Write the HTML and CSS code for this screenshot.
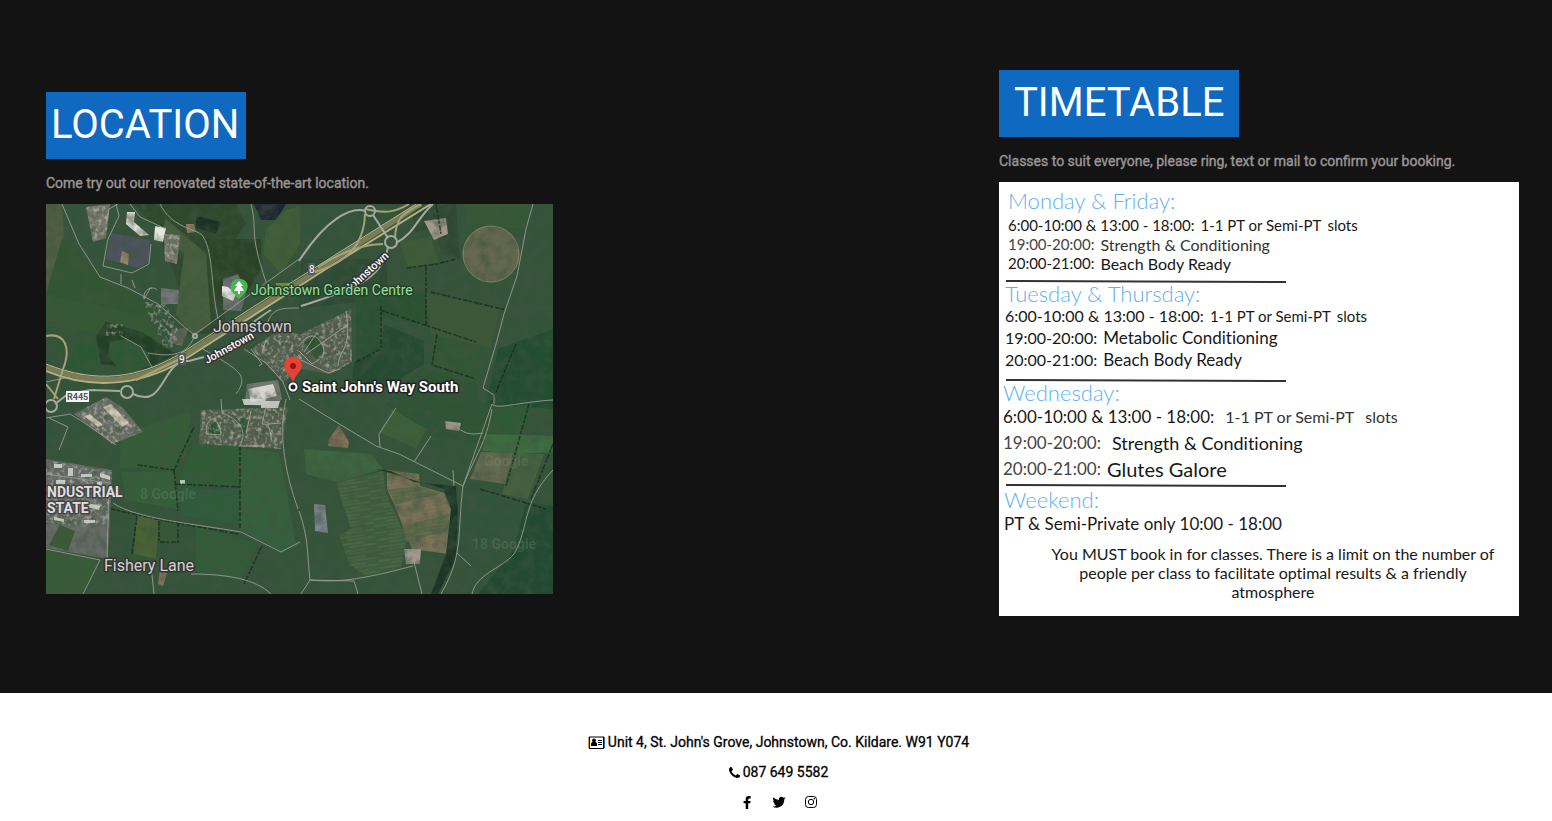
FILE: index.html
```html
<!DOCTYPE html>
<html lang="en">
<head>
<meta charset="utf-8">
<title>Location and timetable</title>
<link rel="stylesheet" href="styles.css">
</head>
<body>
<main class="info">
  <section class="location">
    <h2 class="title title-location">LOCATION</h2>
    <p class="lead">Come try out our renovated state-of-the-art location.</p>
    <svg class="map" viewBox="0 0 507 390" role="img" aria-label="Satellite map of Johnstown">
      <defs>
        <filter id="grain" x="0" y="0" width="100%" height="100%">
          <feTurbulence type="fractalNoise" baseFrequency="0.09" numOctaves="4" seed="8"/>
          <feColorMatrix values="0 0 0 0 0.05  0 0 0 0 0.09  0 0 0 0 0.05  1.6 0 0 0 -0.6"/>
        </filter>
        <filter id="speck" x="0" y="0" width="100%" height="100%">
          <feTurbulence type="fractalNoise" baseFrequency="0.25" numOctaves="2" seed="3"/>
          <feColorMatrix values="0 0 0 0 0.7  0 0 0 0 0.68  0 0 0 0 0.62  3 0 0 0 -1.4"/>
          <feComposite in2="SourceGraphic" operator="in"/>
        </filter>
        <filter id="soft"><feGaussianBlur stdDeviation="0.5"/></filter>
        <pattern id="furrow" width="40" height="7" patternUnits="userSpaceOnUse" patternTransform="rotate(-8)">
          <path d="M0 1H28M12 4H40" stroke="#8a8b66" stroke-width="1" opacity=".35"/>
        </pattern>
      </defs>
      <rect width="507" height="390" fill="#34543a"/>
      <g filter="url(#soft)">
        <path fill="#515f42" d="M0 0H16L18 30 8 85 0 92Z"/>
        <path fill="#325433" d="M16 35 54 75 115 105 88 118 0 90Z"/>
        <path fill="#2d482f" d="M88 0H190L200 20 175 55 180 130 140 130 132 80 110 25Z"/>
        <path fill="#465e3c" d="M120 15 138 30 160 50 165 120 148 132 130 110 138 50 115 30Z"/>
        <path fill="#294228" d="M160 35H215V65L200 90 172 112 165 60Z"/>
        <path fill="#1d2e23" d="M150 12 175 18 170 30 150 24Z"/>
        <path fill="#345834" d="M0 90 100 112 125 150 90 152 60 130 0 122Z"/>
        <path fill="#243f28" d="M60 118 96 128 130 150 100 165 55 160 50 132Z"/>
        <path fill="#2d5834" d="M64 138 80 135 103 149 104 162 75 168 62 152Z"/>
        <path fill="#2c5833" d="M30 138 50 140 54 170 22 165Z"/>
        <path fill="#1b2534" d="M208 0H240L230 16 215 16Z"/>
        <path fill="#405f37" d="M240 6 254 2V40L235 70 217 50 220 25Z"/>
        <path fill="#2f4b35" d="M255 55 340 55 342 85 330 95 295 100 253 105Z"/>
        <path fill="#3c5b38" d="M354 38 385 33 392 58 362 64Z"/>
        <path fill="#2e4833" d="M365 5 410 0 414 55 395 50 390 22 370 28Z"/>
        <path fill="#345836" d="M420 0 484 0 480 25 420 20Z"/>
        <path fill="#2b5133" d="M310 93 380 88 382 120 334 115 333 145 310 158Z"/>
        <path fill="#264a32" d="M338 120 378 137 378 160 338 185 306 176 308 158 335 148Z"/>
        <path fill="#3c5938" d="M380 90 454 105 443 145 385 130Z"/>
        <path fill="#325635" d="M390 132 443 143 432 182 386 165Z"/>
        <path fill="#204d33" d="M452 145 507 125V205L440 200Z"/>
        <path fill="#2f5234" d="M376 164 432 182 430 195 447 200 436 240 370 230 340 200Z"/>
        <path fill="#355d38" d="M75 230 145 208 140 250 128 265 74 264Z"/>
        <path fill="#2e5c36" d="M148 240 195 242 194 283 130 281Z"/>
        <path fill="#345f39" d="M75 268 128 267 132 305 80 296Z"/>
        <path fill="#2e5b3b" d="M134 285 193 285 192 320 136 312Z"/>
        <path fill="#35603e" d="M195 245 233 248 250 340 237 348 193 325Z"/>
        <path fill="#496434" d="M91 311 113 315 110 355 88 350Z"/>
        <path fill="#355937" d="M115 315 130 318 130 338 113 338Z"/>
        <path fill="#325b37" d="M150 322 212 340 195 375 150 368Z"/>
        <path fill="#375c35" d="M0 345 53 357 35 390H0Z"/>
        <path fill="#3d653f" d="M258 245 325 250 337 265 292 278 260 270Z"/>
        <path fill="#3d5e3e" d="M290 279 337 267 340 290 361 335 355 363 320 372 303 360 293 331 305 325Z"/>
        <path fill="url(#furrow)" d="M290 279 337 267 340 290 361 335 355 363 320 372 303 360 293 331 305 325Z"/>
        <path fill="#786f57" d="M341 266 373 270 374 282 398 289 405 305 403 350 366 345 350 305 341 285Z"/>
        <path fill="#5b6849" d="M342 285 374 283 396 289 350 300ZM356 322 403 310V326L360 338Z"/>
        <path fill="url(#furrow)" d="M341 266 373 270 374 282 398 289 405 305 403 350 366 345 350 305 341 285Z"/>
        <path fill="#87705a" d="M283 235 293 221 303 238 302 244 282 242Z"/>
        <path fill="#3d613b" d="M346 205 380 225 370 244 333 228Z"/>
        <path fill="#2e5a36" d="M447 205 486 200 477 235 440 228Z"/>
        <path fill="#3c6c3f" d="M440 230 507 232V248L474 250 436 247Z"/>
        <path fill="#666a50" d="M435 248 467 249 460 280 424 275Z"/>
        <path fill="#476140" d="M467 250 498 250 488 278 482 295 456 290Z"/>
        <path fill="#33533c" d="M416 280 470 300 440 345 415 345Z"/>
        <path fill="#224a30" d="M480 298 507 302V390H432L468 345Z"/>
        <path fill="#1f3626" d="M330 265 345 267 368 278 410 282 412 310 410 355 392 390 385 390 400 350 405 305 398 285Z"/>
        <circle cx="445" cy="50" r="28" fill="#65684f" stroke="#868b6a"/>
        <path fill="#77766c" d="M40 3 64 0 60 34 47 38Z"/>
        <path fill="#4e535e" d="M65 29 104 36 103 58 92 64 60 55Z"/>
        <path fill="#9b8771" d="M76 47 83 50 82 61 74 58Z"/>
        <path fill="#e6e6de" d="M81 8 89 8 88 18 103 31 94 32 80 20ZM109 22 120 24 117 38 108 36Z"/>
        <path fill="#7e7c71" d="M118 30 134 31 131 60 119 57Z"/>
        <path fill="#76787a" d="M115 84 133 86 132 100 115 100Z"/>
        <path fill="#6d7073" d="M177 75 192 70 200 90 195 107 177 106Z"/>
        <path fill="#e2e3df" d="M176 82 182 83 190 90 187 97 176 92Z"/>
        <path fill="#5e6459" d="M126 125 143 124 136 142 122 138Z"/>
        <path fill="#737770" d="M201 180 232 176 236 195 228 204 199 200Z"/>
        <path fill="#d6d5cf" d="M202 185 227 180 231 192 205 198Z"/>
        <path fill="#6d6e67" d="M28 210 60 193 76 203 97 228 66 240Z"/>
        <path fill="#cfc8b8" d="M57 203 65 200 83 219 76 223ZM38 212 44 210 57 221 52 223Z"/>
        <path fill="#686c68" d="M0 255 66 266 62 355 0 344Z"/>
        <path fill="#3a5a35" d="M14 321 29 327 22 347 3 341Z"/>
        <path fill="#9b7d64" d="M140 20 148 20 150 28 141 29ZM114 366 121 369 117 382 112 380Z"/>
        <path fill="#7d8791" d="M268 300 279 301 282 329 269 327Z"/>
        <path fill="#a1978a" d="M358 345 375 345 374 360 360 360ZM399 217 415 219 413 227 400 225ZM378 17 400 14 402 30 388 36Z"/>
        <path fill="#56604f" d="M255 130 305 105 306 158 285 170 255 165 237 178 205 145 230 128ZM155 206 190 205 242 203 235 245 153 240Z"/>
        <path fill="#2d5533" d="M258 138 270 130 278 147 270 155ZM164 221 168 216 175 228 173 232 161 231ZM192 215 202 212 200 230 194 230Z"/>
      </g>
      <rect width="507" height="390" filter="url(#grain)" opacity=".85"/>
      <path filter="url(#speck)" fill="#fff" opacity=".5" d="M0 256 66 268 62 320 35 323 0 318ZM40 3 64 0 60 34 47 38ZM118 30 134 31 131 60 119 57ZM255 130 305 105 306 158 285 170 270 155 278 147 270 130 258 138 255 165 237 178 205 145 230 128ZM155 206 242 203 235 245 153 240ZM30 208 60 193 97 228 66 240ZM60 120H77V132H60ZM97 98 120 100 138 140 118 145Z"/>
      <g fill="#dadbd6" opacity=".8">
        <path d="M8 260H16V264H8ZM22 264H27V272H22ZM35 270H46V273H35ZM51 278H56V283H51ZM10 276H19V280H10ZM34 297 54 302 53 306 33 301ZM8 313 18 315V318L8 316ZM38 316H49V319H38ZM54 269 64 272V276L54 273ZM4 300H16V303H4Z"/>
        <path d="M196 195H220L218 201H198ZM215 197H234L232 204H215ZM134 276H139V280H134Z"/>
      </g>
      <g fill="none" stroke="#162a1a" stroke-width="1.500" stroke-dasharray="5 1 3 2" opacity=".75">
        <path d="M92 261 128 266 148 223M128 266 132 307M130 280 193 283M194 242V325M65 305 115 316 192 330M91 312 86 350M113 317V338H132V320M361 64 391 60 410 55M380 62V122M335 102V145L310 158M334 106 430 138M385 88 460 106M391 130 386 161 430 175M483 200 460 282M507 240 485 295M390 0 395 30M470 140 445 200M434 285 500 305M216 342 198 380"/>
      </g>
      <g fill="none" stroke="#9ba096" stroke-width="1" opacity=".85">
        <path d="M16 0 33 40 54 73 82 84 112 100 148 131M70 0 73 12 62 35 57 62 86 69 103 60 105 40M84 0 94 13 120 25M114 0C125 22 145 24 155 30 168 44 164 80 172 115M205 0C212 28 202 25 220 78M75 70V80M98 95 105 83M75 132 95 143 107 165M102 149C120 152 140 154 148 133M60 20 63 5 72 0M487 0 480 25 471 72 458 110 450 140 437 184 448 191 448 200M0 178 37 170M148 131 253 55M218 128C225 105 230 104 253 104M157 145C190 165 205 170 190 190M198 145 220 159 237 178 244 196"/>
        <path d="M175 195 176 209C190 214 204 225 193 243M220 203 216 220C224 220 224 226 226 238M240 195C230 240 245 285 252 305M0 214 24 210 37 218 70 241M3 214 22 223 13 246M0 270 63 279 61 355M0 345 54 356 37 390M67 299C90 315 150 320 195 328L235 348 254 338M105 361 108 390M145 370C180 370 210 375 225 390M253 195 290 218 330 242 353 250 417 282 446 200C450 206 473 198 507 196M446 205C440 240 430 250 417 282 411 330 418 350 395 390M507 266C475 300 484 322 468 350 455 365 430 370 426 390M253 307C263 335 261 350 264 376 300 380 335 370 367 362M411 349 425 362M255 390 264 376 308 377 312 390M367 354 376 390M350 204 333 230 334 243M385 232 368 258M408 282 407 266M411 223C420 232 430 230 437 229"/>
      </g>
      <g fill="none" stroke="#b0ada1" stroke-width="1" opacity=".8">
        <path d="M253 142C263 128 270 130 276 140 282 152 272 156 266 160L253 147M260 150 300 122M270 130 258 148M255 156 282 169 294 165M295 125 302 122M300 107C306 148 294 142 292 162M161 230C158 220 165 214 168 215 173 220 175 225 175 231ZM194 242 219 242M222 220 235 219M205 207 200 230"/>
        <path d="M205 145 216 160 213 162M217 145 220 136M86 76 89 84M98 95C97 82 110 83 111 86" />
      </g>
      <g fill="none" stroke="#7a7c58" stroke-width="5">
        <path d="M0 163C50 184 95 178 139 151L253 78 375 0"/>
        <path d="M0 160C50 180 93 175 137 148L251 75 370 0" stroke="#c0bb8e" stroke-width="1"/>
        <path d="M0 167C50 188 102 180 144 152L280 65 385 0" stroke="#b4b184" stroke-width="2"/>
        <path d="M0 132C20 128 25 145 17 165L8 195M262 70C300 60 318 42 319 10M272 63C300 45 320 40 337 40M349 34C350 15 355 10 375 0M320 5C340 10 350 8 363 0M90 176 140 152M0 180 12 195" stroke="#a5a276" stroke-width="2"/>
      </g>
      <g fill="none" stroke="#a4aaa1" stroke-width="2">
        <path d="M253 57C280 15 305 2 320 7M327 11 342 34M342 42C338 80 290 90 255 102M225 106C210 115 205 122 193 127M350 39C370 28 370 15 387 0M9 200 22 190 45 186 74 187M87 190C120 206 115 155 143 157L158 153"/>
        <circle cx="345" cy="38" r="6"/><circle cx="324" cy="7" r="5"/><circle cx="81" cy="188" r="6"/><circle cx="5" cy="202" r="6"/><circle cx="149" cy="132" r="2" stroke-width="2"/>
      </g>
      <g class="watermark"><text x="94" y="295">8 Google</text><text x="438" y="262">Google</text><text x="426" y="345">18 Google</text></g>
      <g class="road-label">
        <text transform="translate(161 160) rotate(-29)">Johnstown</text>
        <text transform="translate(303 89) rotate(-42)">Johnstown</text>
      </g>
      <path fill="#59585a" d="M132 149H140V161H132ZM262 59H269V71H262Z"/>
      <g class="shield"><text x="133" y="159">9</text><text x="263" y="69">8</text></g>
      <rect x="20" y="187" width="23" height="11" fill="#f5f5f3"/><text class="route" x="21" y="196">R445</text>
      <g class="place"><text x="167" y="128">Johnstown</text><text x="58" y="367">Fishery Lane</text></g>
      <g class="estate"><text x="1" y="293">NDUSTRIAL</text><text x="1" y="309">STATE</text></g>
      <path fill="#8fb629" opacity=".6" d="M230 79H245V92H230Z"/>
      <path fill="#4db357" d="M193 75c-10 0-10 11-5 15l5 5 5-5c6-5 5-15-5-15Z"/>
      <path fill="#fff" d="M193 77 189 82H191L188 87H192V90H194V87H198L195 82H197Z"/>
      <text class="garden" x="205" y="91">Johnstown Garden Centre</text>
      <circle cx="247" cy="183" r="4" fill="#222" stroke="#333" stroke-width="4"/><circle cx="247" cy="183" r="3.500" fill="#222" stroke="#fff" stroke-width="2"/>
      <path fill="#e94235" d="M247 153c-9 0-11 9-6 15 3 4 5 6 6 11 1-5 3-7 6-11 5-6 3-15-6-15Z"/><circle cx="247" cy="162" r="3" fill="#8b1712"/>
      <text class="pin-label" x="256" y="188">Saint John's Way South</text>
    </svg>
  </section>

  <section class="timetable">
    <h2 class="title title-timetable">TIMETABLE</h2>
    <p class="lead">Classes to suit everyone, please ring, text or mail to confirm your booking.</p>
    <div class="board">
      <div class="day day-monday">
        <h3>Monday &amp; Friday:</h3>
        <p class="small"><span>6:00-10:00 &amp; 13:00 - 18:00:</span><span>1-1 PT or Semi-PT</span><span>slots</span></p>
        <p><span class="grey small">19:00-20:00:</span><span class="dim">Strength &amp; Conditioning</span></p>
        <p><span class="small">20:00-21:00:</span><span>Beach Body Ready</span></p>
      </div>
      <svg class="rule" viewBox="0 0 282 3" aria-hidden="true"><path d="M1 1 281 2"/></svg>
      <div class="day day-tuesday">
        <h3>Tuesday &amp; Thursday:</h3>
        <p><span>6:00-10:00 &amp; 13:00 - 18:00:</span><span class="small">1-1 PT or Semi-PT</span><span class="small">slots</span></p>
        <p><span>19:00-20:00:</span><span class="large">Metabolic Conditioning</span></p>
        <p><span>20:00-21:00:</span><span class="large">Beach Body Ready</span></p>
      </div>
      <svg class="rule" viewBox="0 0 282 3" aria-hidden="true"><path d="M1 1 281 2"/></svg>
      <div class="day day-wednesday">
        <h3>Wednesday:</h3>
        <p class="wide"><span class="large">6:00-10:00 &amp; 13:00 - 18:00:</span><span class="dim">1-1 PT or Semi-PT</span><span class="dim">slots</span></p>
        <p class="wide"><span class="grey large">19:00-20:00:</span><span class="xlarge">Strength &amp; Conditioning</span></p>
        <p><span class="grey large">20:00-21:00:</span><span class="xxlarge">Glutes Galore</span></p>
      </div>
      <svg class="rule" viewBox="0 0 282 3" aria-hidden="true"><path d="M1 1 281 2"/></svg>
      <div class="day day-weekend">
        <h3>Weekend:</h3>
        <p class="large">PT &amp; Semi-Private only 10:00 - 18:00</p>
      </div>
      <p class="note">You MUST book in for classes. There is a limit on the number of people per class to facilitate optimal results &amp; a friendly atmosphere</p>
    </div>
  </section>
</main>

<footer class="footer">
  <p><svg class="card-icon" viewBox="0 0 17 13" aria-hidden="true"><path fill="none" stroke="#000" d="M1 1H16M1 12.500H16M1.500 1V12M15.500 1V12"/><path fill="none" stroke="#e9912a" d="M.5 1V12"/><path fill="none" stroke="#1f75b8" d="M16.500 1V12"/><path fill="none" stroke="#000" d="M10 4.500H14M10 6.500H14M10 8.500H14"/><circle cx="6" cy="4.500" r="1.900"/><path d="M3 10V8Q3 6.500 4.500 6H7.500Q9 6.500 9 8V10Z"/></svg>Unit 4, St. John's Grove, Johnstown, Co. Kildare. W91 Y074</p>
  <p><svg class="phone-icon" viewBox="0 0 1408 1408" aria-hidden="true"><path d="M1408 1112q0 27-10 70.500t-21 68.500q-21 50-122 106-94 51-186 51-27 0-53-3.500t-57.500-12.500-47-14.500-55.500-20.500-49-18q-98-35-175-83-127-79-264-216t-216-264q-48-77-83-175-3-9-18-49t-20.500-55.500-14.500-47-12.500-57.500-3.500-53q0-92 51-186 56-101 106-122 25-11 68.500-21t70.500-10q14 0 21 3 18 6 53 76 11 19 30 54t35 63.500 31 53.500q3 4 17.500 25t21.500 35.500 7 28.500q0 20-28.500 50t-62 55-62 53-28.500 46q0 9 5 22.500t8.500 20.500 14 24 11.500 19q76 137 174 235t235 174q2 1 19 11.500t24 14 20.500 8.500 22.500 5q18 0 46-28.500t53-62 55-62 50-28.500q14 0 28.500 7t35.500 21.500 25 17.500q25 15 53.500 31t63.500 35 54 30q70 35 76 53 3 7 3 21z"/></svg>087 649 5582</p>
  <nav class="social" aria-label="Social media">
    <a href="#" aria-label="Facebook"><svg viewBox="0 0 14 14"><path d="M10.700 1.200V3.400H9.400Q8.200 3.400 8.200 4.600V5.900H10.600L10.300 8.200H8.200V14H5.700V8.200H3.600V5.900H5.700V4.100Q5.700 1 8.800 1Q10 1 10.700 1.200Z"/></svg></a>
    <a href="#" aria-label="Twitter"><svg viewBox="0 0 14 14"><path d="M13.600 3.200Q13 4 12.200 4.600C12.500 9.500 8.700 12.700 4.800 12.700Q2.400 12.700.5 11.500Q2.800 11.700 4.500 10.300Q2.600 10.200 1.900 8.400H3.100Q.9 7.800.9 5.600L2.100 6Q.1 4.500 1.300 2.300Q3.700 5 6.900 5.100C6.300 2.200 9.500.8 11.400 2.800Q12.300 2.600 13.200 2.100Q12.900 3.100 12 3.600Q12.800 3.500 13.600 3.200Z"/></svg></a>
    <a href="#" aria-label="Instagram"><svg viewBox="0 0 14 14"><g fill="none" stroke="#000"><rect x="1.500" y="1.500" width="11" height="11" rx="3"/><circle cx="7" cy="7" r="2.700"/></g><circle cx="10.300" cy="3.800" r=".8"/></svg></a>
  </nav>
</footer>
</body>
</html>
```
FILE: styles.css
```css
* { box-sizing: border-box; }
body { margin: 0; background: #fff; color: #000; font-family: Roboto, sans-serif; }
h2, h3, p { margin: 0; font-weight: 400; }

.info {
  display: flex;
  justify-content: space-between;
  align-items: center;
  padding: 70px 33px 77px 46px;
  background: #131313;
}
.location { flex: 0 1 507px; }
.timetable { flex: 0 1 520px; }
.title {
  width: fit-content;
  background: #0f69c1;
  color: #fff;
  font-size: 40px;
  line-height: 47px;
  text-align: center;
}
.title-location { padding: 9px 7px 11px 5px; }
.title-timetable { padding: 9px 15px 11px; }
.lead {
  padding: 14px 0 11px;
  color: #9b9595;
  font-size: 14px;
  line-height: 20px;
  -webkit-text-stroke: 0.4px;
}

.map { display: block; width: 100%; height: auto; overflow: hidden; }
.map text { font-family: Roboto, sans-serif; paint-order: stroke; stroke-linejoin: round; }
.watermark { fill: #8aa58a; font-size: 14px; font-weight: 700; opacity: .2; }
.road-label { fill: #fff; stroke: #333; stroke-width: 3px; font-size: 11px; font-weight: 500; }
.shield { fill: #fff; font-size: 10px; }
.map .route { fill: #555; font-size: 9px; font-weight: 700; }
.place { fill: #d3d1cc; stroke: #333; stroke-width: 3px; font-size: 16px; }
.estate { fill: #dedede; stroke: #444; stroke-width: 3px; font-size: 14px; font-weight: 700; }
.garden { fill: #97df9b; stroke: #26422b; stroke-width: 3px; font-size: 14px; }
.pin-label { fill: #fff; stroke: #222; stroke-width: 3px; font-size: 15px; font-weight: 700; }

.board {
  display: flex;
  flex-direction: column;
  padding: 7px 10px 15px 2px;
  background: #fff;
  color: #181818;
  font-family: Lato, sans-serif;
  font-size: 16px;
  font-variant-ligatures: none;
}
.day h3 { color: #5fb0f5; font-size: 22px; line-height: 22px; font-weight: 300; }
.day p { display: flex; gap: 6px; align-items: center; line-height: 22px; }
.day .wide { gap: 11px; }
.day .small { font-size: 15px; }
.day .large { font-size: 17px; }
.day .xlarge { font-size: 18px; }
.day .xxlarge { font-size: 20px; }
.day .grey { color: #444; }
.day .dim { color: #333; }
.day-monday { padding: 0 0 7px 7px; }
.day-monday h3 { padding-bottom: 3px; line-height: 24px; }
.day-monday p { line-height: 19px; }
.day-tuesday { padding: 0 0 8px 4px; }
.day-wednesday { padding: 0 0 2px 2px; }
.day-wednesday p { line-height: 26px; }
.day-weekend { padding: 0 0 9px 3px; }
.day-weekend h3 { line-height: 26px; }
.rule { width: 282px; height: 3px; margin-left: 4px; fill: none; stroke: #333; stroke-width: 2; }
.note { padding-left: 36px; line-height: 19px; text-align: center; }

.footer { display: flex; flex-direction: column; align-items: center; padding: 39px 0 11px 5px; }
.footer p {
  display: flex;
  align-items: center;
  gap: 3px;
  margin-bottom: 10px;
  font-size: 14px;
  line-height: 20px;
  -webkit-text-stroke: 0.3px;
}
.card-icon { width: 17px; height: 13px; }
.phone-icon { width: 11px; height: 11px; }
.social { display: flex; gap: 18px; line-height: 20px; }
.social a { display: flex; align-items: center; height: 20px; color: #000; }
.social svg { width: 14px; height: 14px; }
```
